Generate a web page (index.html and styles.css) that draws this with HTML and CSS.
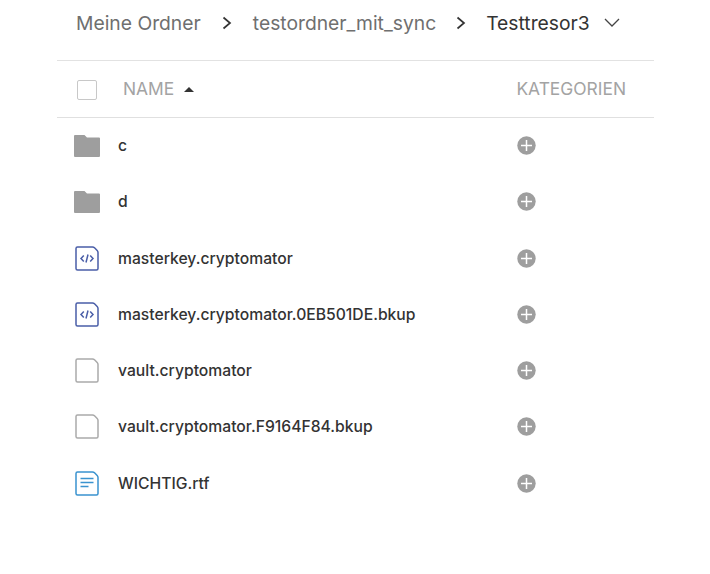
FILE: index.html
```html
<!DOCTYPE html>
<html lang="de">
<head>
<meta charset="utf-8">
<title>Testtresor3</title>
<link rel="stylesheet" href="styles.css">
</head>
<body>
<svg class="defs" width="0" height="0">
  <symbol id="folder" viewBox="0 0 26 22"><path d="M0 1a1 1 0 0 1 1-1h9.500l2.500 2.500h12a1 1 0 0 1 1 1V21a1 1 0 0 1-1 1H1a1 1 0 0 1-1-1z" fill="#9e9e9e"/></symbol>
  <symbol id="plus" viewBox="0 0 19 19"><circle cx="9.500" cy="9.500" r="9.200" fill="#9e9e9e"/><path d="M9.500 4v11M4 9.500h11" stroke="#fff" stroke-width="1.500"/></symbol>
  <symbol id="code" viewBox="0 0 24 25"><path d="M2.500 1h15c1 0 1.500.3 2 .8l2.700 2.700c.5.500.8 1 .8 2v16a1.500 1.500 0 0 1-1.500 1.500h-19A1.500 1.500 0 0 1 1 22.500v-20A1.500 1.500 0 0 1 2.500 1z" fill="#fff" stroke="#4a5ea8" stroke-width="1.500"/><path d="M8.800 9.500 6 12.500l2.800 3M15.200 9.500l2.800 3-2.800 3M13 8.500l-2 8" fill="none" stroke="#4a5ea8" stroke-width="1.500"/></symbol>
  <symbol id="blank" viewBox="0 0 24 25"><path d="M2.500 1h15c1 0 1.500.3 2 .8l2.700 2.700c.5.500.8 1 .8 2v16a1.500 1.500 0 0 1-1.500 1.500h-19A1.500 1.500 0 0 1 1 22.500v-20A1.500 1.500 0 0 1 2.500 1z" fill="#fff" stroke="#aaa" stroke-width="1.500"/></symbol>
  <symbol id="doc" viewBox="0 0 24 25"><path d="M2.500 1h15c1 0 1.500.3 2 .8l2.700 2.700c.5.500.8 1 .8 2v16a1.500 1.500 0 0 1-1.500 1.500h-19A1.500 1.500 0 0 1 1 22.500v-20A1.500 1.500 0 0 1 2.500 1z" fill="#fff" stroke="#3a93cf" stroke-width="1.500"/><path d="M5.500 7.500h13M5.500 11.500h13M5.500 15.500h8" fill="none" stroke="#3a93cf" stroke-width="1.600"/></symbol>
</svg>
<main class="page">
  <nav class="crumbs">
    <span class="crumb">Meine Ordner</span>
    <svg class="sep" width="10" height="14" viewBox="0 0 10 14"><path d="M1.500 1.500 8 7l-6.500 5.500" fill="none" stroke="#333" stroke-width="1.700"/></svg>
    <span class="crumb">testordner_mit_sync</span>
    <svg class="sep sep-last" width="10" height="14" viewBox="0 0 10 14"><path d="M1.500 1.500 8 7l-6.500 5.500" fill="none" stroke="#333" stroke-width="1.700"/></svg>
    <span class="crumb current">Testtresor3</span>
    <svg class="caret" width="16" height="9" viewBox="0 0 16 9"><path d="M1 1l7 7 7-7" fill="none" stroke="#444" stroke-width="1.300"/></svg>
  </nav>
  <div class="head">
    <span class="check"></span>
    <span class="col-name">NAME</span>
    <span class="sort"></span>
    <span class="col-cat">KATEGORIEN</span>
  </div>
  <ul class="list">
    <li class="row">
      <svg class="icon folder"><use href="#folder"/></svg>
      <span class="name">c</span><svg class="plus"><use href="#plus"/></svg>
    </li>
    <li class="row">
      <svg class="icon folder"><use href="#folder"/></svg>
      <span class="name">d</span><svg class="plus"><use href="#plus"/></svg>
    </li>
    <li class="row">
      <svg class="icon file"><use href="#code"/></svg>
      <span class="name">masterkey.cryptomator</span><svg class="plus"><use href="#plus"/></svg>
    </li>
    <li class="row">
      <svg class="icon file"><use href="#code"/></svg>
      <span class="name">masterkey.cryptomator.0EB501DE.bkup</span><svg class="plus"><use href="#plus"/></svg>
    </li>
    <li class="row">
      <svg class="icon file"><use href="#blank"/></svg>
      <span class="name">vault.cryptomator</span><svg class="plus"><use href="#plus"/></svg>
    </li>
    <li class="row">
      <svg class="icon file"><use href="#blank"/></svg>
      <span class="name">vault.cryptomator.F9164F84.bkup</span><svg class="plus"><use href="#plus"/></svg>
    </li>
    <li class="row">
      <svg class="icon file"><use href="#doc"/></svg>
      <span class="name">WICHTIG.rtf</span><svg class="plus"><use href="#plus"/></svg>
    </li>
  </ul>
</main>
</body>
</html>
```
FILE: styles.css
```css
* { box-sizing: border-box; }
html, body { margin: 0; padding: 0; background: #fff; }
body { font-family: Inter, "Liberation Sans", sans-serif; color: #333; }
.defs { display: block; height: 0; }
.page { width: 597px; margin-left: 57px; }
.crumbs { height: 61px; padding: 0 0 15px 19px; display: flex; align-items: center; font-size: 19.300px; color: #6f6f6f; border-bottom: 1px solid #e2e2e2; }
.sep { margin: 0 20.500px 0 21.500px; flex: none; }
.sep-last { margin: 0 20px 0 20px; }
.current { color: #333; }
.caret { margin-left: 14px; flex: none; }
.head { height: 57px; padding-bottom: 2px; display: flex; align-items: center; border-bottom: 1px solid #e0e0e0; color: #a3a3a3; font-size: 17.400px; }
.check { width: 20px; height: 20px; margin: 3px 0 0 20px; border: 1px solid #c8c8c8; border-radius: 2px; }
.col-name { margin-left: 26px; }
.sort { width: 0; height: 0; margin: 2px 0 0 10px; border: 5px solid transparent; border-top: 0; border-bottom: 5px solid #333; }
.col-cat { margin-left: auto; margin-right: 28px; }
.list { list-style: none; margin: 0; padding: 0; }
.row { height: 56.250px; padding-bottom: 1px; display: flex; align-items: center; font-size: 15.700px; font-weight: 500; color: #333; }
.icon { flex: none; }
.folder { width: 26px; height: 22px; margin: 0 18px 0 17px; }
.file { width: 24px; height: 25px; margin: 0 19px 0 18px; }
.name { flex: 1; }
.plus { width: 19px; height: 19px; flex: none; margin-right: 118px; }
```
